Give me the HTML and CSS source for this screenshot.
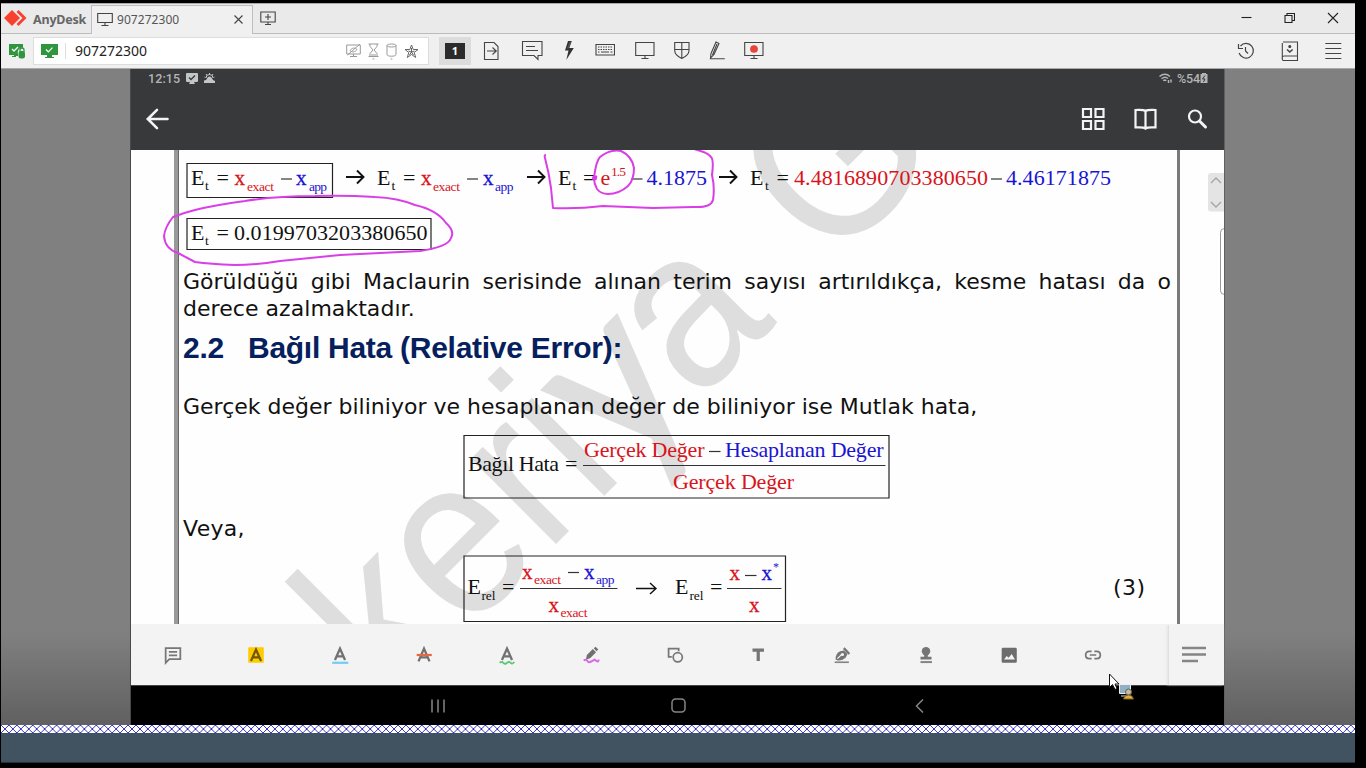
FILE: index.html
```html
<!DOCTYPE html>
<html lang="tr">
<head>
<meta charset="utf-8">
<title>AnyDesk</title>
<link rel="stylesheet" href="styles.css">
</head>
<body>
<div class="window">
  <header class="tabs">
    <div class="brand">
      <svg width="24" height="18" viewBox="0 0 24 18"><path d="M8 1l8 8-8 8-8-8z" fill="#f8402f"/><path d="M12.500 3l2-2 8 8-8 8-2-2 6-6z" fill="#f8402f"/></svg>
      <span>AnyDesk</span>
    </div>
    <div class="tab">
      <svg width="16" height="15" viewBox="0 0 16 15" class="line"><path d="M.7 1.500h14.600v9H.7zM8 10.500v2.800M4.500 13.500h7"/></svg>
      <span class="tab-name">907272300</span>
      <svg width="9" height="9" viewBox="0 0 9 9" class="line"><path d="M.5.5l8 8M8.500.5l-8 8"/></svg>
    </div>
    <svg class="line new-tab" width="16" height="15" viewBox="0 0 16 15"><path d="M.8 1h14.400v10H.8zM8 3v6M5 6h6M8 11v2.500M5 13.500h6"/></svg>
    <div class="win-buttons">
      <svg width="11" height="11" viewBox="0 0 11 11" class="line dark"><path d="M.5 5.500h10"/></svg>
      <svg width="11" height="11" viewBox="0 0 11 11" class="line dark"><path d="M1 3.500h7v7H1zM3 3.500v-2h7.500v7H8"/></svg>
      <svg width="12" height="12" viewBox="0 0 12 12" class="line dark"><path d="M1 1l10 10M11 1L1 11"/></svg>
    </div>
  </header>

  <div class="toolbar">
    <svg class="lock" width="17" height="15" viewBox="0 0 17 15"><path d="M0 0h14v4c-3-1-6 2-5 6v2H7v1H3v-1h2v-1H0z" fill="#2f963f"/><path d="M3 5l2 2 4-4" fill="none" stroke="#fff" stroke-width="1.300"/><rect x="9.500" y="7" width="6.500" height="7.500" rx="2.500" fill="#2f963f"/><path d="M11 8V6a2 2 0 014 0v2" fill="none" stroke="#2f963f" stroke-width="1.300"/></svg>
    <div class="address">
      <svg width="17" height="15" viewBox="0 0 17 15"><path d="M0 0h17v11h-6v2h2v1H4v-1h2v-2H0z" fill="#2f963f"/><path d="M5 5.500l2.300 2.300 4.200-4.200" fill="none" stroke="#fff" stroke-width="1.200"/></svg>
      <span class="address-text">907272300</span>
      <svg width="15" height="14" viewBox="0 0 15 14" class="line pale"><path d="M.7 1h13.600v9H.7zM7.500 10v2.500M4 12.500h7M1.500 11L14 0M4 6.500c2-3 5-3 7-1-2 3-5 3-7 1"/></svg>
      <svg width="11" height="17" viewBox="0 0 11 17" class="line pale"><path d="M.5 1h10M.5 13.500h10M2 1v2.500L5 7 2 10.500v3M9 1v2.500L6 7l3 3.500v3M3 12h5"/><circle cx="5.500" cy="16" r=".7" stroke="#b8c0e8"/></svg>
      <svg width="11" height="17" viewBox="0 0 11 17" class="line pale"><path d="M1 2.500c0-2 9-2 9 0v9c0 2.300-9 2.300-9 0zM1 2.500c0 2 9 2 9 0"/><circle cx="5.500" cy="16" r=".7" stroke="#b8c0e8"/></svg>
      <svg width="15" height="15" viewBox="0 0 15 15" class="line star"><path d="M7.500 1l1.700 4.500H14l-3.800 3 1.500 5-4.200-3-4.200 3 1.500-5-3.800-3h4.800zM7.500 4v4M4.500 7l3 1 3-1M7.500 8l-2 3M7.500 8l2 3"/></svg>
    </div>
    <div class="monitor-slot"><span>1</span></div>
    <div class="tools">
      <svg width="22" height="22" viewBox="481 40 22 22" class="line"><path d="M485.500 42.500h9.500l4 4v13h-13.500zM488 51h9M493.500 47.500l3.800 3.500-3.800 3.500"/></svg>
      <svg width="22" height="22" viewBox="522 40 22 22" class="line"><path d="M523.500 41.500h19.500v14h-4v4l-4-4h-11.500zM527 46.500h9M527 50.500h12"/></svg>
      <svg width="14" height="22" viewBox="563 40 14 22"><path d="M569 41h3.800l-2.500 7h4.500l-7.500 12 2.200-9.500H566z" fill="#333"/><path d="M570.500 42l-2.500 6.500h1.500l2.500-6.500z" fill="#555"/></svg>
      <svg width="20" height="22" viewBox="596 40 20 22" class="line"><path d="M597 44.500h18.500v10.500H597z"/><path d="M599 47h15M599 49.500h15" stroke-dasharray="1.500 1"/><path d="M599 52h1.500M602 52h8M611.500 52h2"/></svg>
      <svg width="20" height="22" viewBox="633 40 20 22" class="line"><path d="M633.700 42.500h18.300v13h-18.300zM643 55.500v3M639.500 58.500h7"/></svg>
      <svg width="16" height="22" viewBox="671.500 40 16 22" class="line"><path d="M672.200 42.500h14.300v8c0 4-4 6.500-7.200 8-3.200-1.500-7.100-4-7.100-8zM679.300 42.500v16M672.200 49.500h14.300"/></svg>
      <svg width="16" height="22" viewBox="709 40 16 22" class="line"><path d="M711 53.500l5-11.500 3 1.500-5 11-3.500 3.500zM717 44l-4.500 11M710 58.800h14.800"/></svg>
      <svg width="20" height="22" viewBox="743 40 20 22" class="line"><path d="M743.700 42.500H762v13h-18.300zM753 55.500v3M749.500 58.500h7"/><circle cx="753" cy="49" r="3.300" fill="#e6453c" stroke="#e6453c"/></svg>
    </div>
    <div class="right-tools">
      <svg width="18" height="18" viewBox="1237 42 18 18" class="line"><path d="M1240.500 46a7.300 7.300 0 11-1.400 7M1238.500 44v4.500h4.500M1245.500 47v4l2.500 2.500" stroke-width="1.200"/></svg>
      <svg width="18" height="20" viewBox="1281 41 18 20" class="line"><path d="M1283 42h14.500v18.500H1283c-1.500-2-1-4.500 1-4.500h13.500M1282.300 59V43"/><path d="M1287 49.500l2.800 2.500 2.800-2.500" stroke-width="1.600"/><circle cx="1289.800" cy="46.500" r="1" fill="#333"/></svg>
      <svg width="17" height="18" viewBox="1325 42 17 18" class="line"><path d="M1325.300 43.500h16M1325.300 48.500h16M1325.300 53.500h16M1325.300 58.500h16"/></svg>
    </div>
  </div>

  <main class="remote">
    <div class="tablet">
      <div class="status">
        <span>12:15</span>
        <svg width="12" height="12" viewBox="0 0 12 12"><path d="M1 0h10q1 0 1 1v7q0 1-1 1H8l1 2H3l1-2H1Q0 9 0 8V1q0-1 1-1z" fill="#c4c5c6"/><path d="M3 4.500l2 2 4-4" fill="none" stroke="#38393b" stroke-width="1.300"/></svg>
        <svg width="11" height="11" viewBox="0 0 11 11"><path d="M0 10V7.500l2-.5 2-3q2-1 3.500.5L9 7l2 1v2z" fill="#c4c5c6"/><path d="M2 5a3.500 3.500 0 017 0M5.500 0v2M2 1l1 1.500M9 1L8 2.500M.5 4l1 .5M10.500 4l-1 .5" fill="none" stroke="#c4c5c6"/></svg>
        <div class="status-right">
          <svg width="13" height="11" viewBox="0 0 13 11" fill="none" stroke="#b4b5b6" stroke-width="1.500"><path d="M.5 3.500q5.500-4.500 10.500 0M2.500 5.800q3.500-3 6.500-.3M4.300 7.800q1.500-1.300 3 0M9.500 7v3M12 6.500v3"/></svg>
          <span>%54</span>
          <svg width="8" height="11" viewBox="0 0 8 11"><path d="M2 0h4v1h1.500v9h-7V1H2z" fill="#b4b5b6"/><path d="M5 2.500L2.500 6H5L3.500 9" fill="none" stroke="#38393b"/></svg>
        </div>
      </div>

      <div class="app-bar">
        <svg width="24" height="24" viewBox="145 107 24 24" class="white"><path d="M167.500 119H149M157 109.800l-9.200 9.200 9.200 9.200"/></svg>
        <div class="app-actions">
          <svg width="24" height="24" viewBox="1081 107 24 24" class="white thin"><path d="M1083 109h8v8h-8zM1095.500 109h8v8h-8zM1083 121h8v8h-8zM1095.500 121h8v8h-8z"/></svg>
          <svg width="24" height="24" viewBox="1133 107 24 24" class="white thin"><path d="M1145.500 111c-2-1.500-6-1-10-1v17.500c4 0 8-.5 10 1 2-1.500 6-1 10-1V110c-4 0-8-.5-10 1zv17.500"/></svg>
          <svg width="24" height="24" viewBox="1185 107 24 24" class="white thin"><circle cx="1195" cy="116.500" r="6"/><path d="M1199.500 121l6 6" stroke-width="3"/></svg>
        </div>
      </div>

      <section class="document">
        <svg class="watermark" width="1093" height="474" viewBox="131 150 1093 474">
          <g transform="translate(391.800 708.200) rotate(-45)"><g transform="scale(.905 1)">
            <text class="wm" x="0" y="0">keri<tspan class="wm-y" x="364">y</tspan><tspan x="476">a</tspan><tspan x="686">G</tspan></text>
          </g></g>
        </svg>
        <article class="sheet">
          <svg class="math row-one" width="996" height="58" viewBox="183 150 996 58">
            <path class="frame" d="M187 163.500h145.500v34H187z"/>
            <text x="191" y="185">E</text><text class="sub" x="205" y="190">t</text><text x="216.500" y="185">=</text><text class="red var" x="234.500" y="185">x</text><text class="sub red" x="247" y="190.500" textLength="27">exact</text><path class="bar" d="M281 179h11"/><text class="blue var" x="296" y="185">x</text><text class="sub blue" x="309" y="190.500" textLength="18">app</text>
            <path class="arrow" d="M346 177h17M357 170.500l6.500 6.500-6.500 6.500"/>
            <text x="377" y="185">E</text><text class="sub" x="391.500" y="190">t</text><text x="403" y="185">=</text><text class="red var" x="421" y="185">x</text><text class="sub red" x="433" y="190.500" textLength="27">exact</text><path class="bar" d="M467 179h11"/><text class="blue var" x="483" y="185">x</text><text class="sub blue" x="495" y="190.500" textLength="18.500">app</text>
            <path class="arrow" d="M527 177h17M538 170.500l6.500 6.500-6.500 6.500"/>
            <text x="558" y="185">E</text><text class="sub" x="572.500" y="190">t</text><text x="583" y="185">=</text><text class="red" x="600.500" y="185">e</text><text class="sub red" x="611" y="176" textLength="15">1.5</text><path class="bar" d="M631 179h11.500"/><text class="blue" x="646.500" y="185" textLength="60.500">4.1875</text>
            <path class="arrow" d="M719 177h17M730 170.500l6.500 6.500-6.500 6.500"/>
            <text x="750" y="185">E</text><text class="sub" x="765" y="190">t</text><text x="776.500" y="185">=</text><text class="red" x="794" y="185" textLength="194">4.4816890703380650</text><path class="bar" d="M991 179h11"/><text class="blue" x="1006" y="185" textLength="105">4.46171875</text>
          </svg>
          <svg class="math" width="996" height="60" viewBox="183 208 996 60">
            <path class="frame" d="M187 218.500h244v31H187z"/>
            <text x="191" y="240">E</text><text class="sub" x="205" y="245">t</text><text x="216.500" y="240">=</text><text x="234" y="240" textLength="193.500">0.0199703203380650</text>
          </svg>
          <p class="para"><span class="justified">Görüldüğü gibi Maclaurin serisinde alınan terim sayısı artırıldıkça, kesme hatası da o</span><span class="last">derece azalmaktadır.</span></p>
          <h2><span class="num">2.2</span><span>Bağıl Hata (Relative Error):</span></h2>
          <p class="line-one">Gerçek değer biliniyor ve hesaplanan değer de biliniyor ise Mutlak hata,</p>
          <svg class="math centered" width="428" height="66" viewBox="463 434 428 66">
            <path class="frame" d="M464 435.500h425v62.500H464z"/>
            <text x="468" y="471" textLength="91">Bağıl Hata</text><text x="565" y="471">=</text>
            <path class="rule" d="M583 465.500h302.500"/>
            <text class="red" x="584" y="457" textLength="120.500">Gerçek Değer</text><path class="bar" d="M709 451.500h11.500"/><text class="blue" x="725" y="457" textLength="158.500">Hesaplanan Değer</text>
            <text class="red" x="673" y="489" textLength="121">Gerçek Değer</text>
          </svg>
          <p class="veya">Veya,</p>
          <div class="numbered">
            <svg class="math centered" width="324" height="68" viewBox="463 555 324 68">
              <path class="frame" d="M464 556h321.500v65.500H464z"/>
              <text x="467.500" y="594">E</text><text class="sub" x="481.500" y="599.500" textLength="14">rel</text><text x="502" y="594">=</text>
              <path class="rule" d="M520 588.500h97.500M727 588.500h54.500"/>
              <text class="red var" x="522" y="579">x</text><text class="sub red" x="534" y="583.500" textLength="27">exact</text><path class="bar" d="M568 572.500h11"/><text class="blue var" x="584" y="579">x</text><text class="sub blue" x="596" y="583.500" textLength="18.500">app</text>
              <text class="red var" x="548.500" y="611.500">x</text><text class="sub red" x="560.500" y="617" textLength="27">exact</text>
              <path class="arrow fine" d="M636 588.500h20M650 583l6 5.500-6 5.500"/>
              <text x="675" y="594">E</text><text class="sub" x="689.500" y="599.500" textLength="14">rel</text><text x="710" y="594">=</text>
              <text class="red var" x="729.500" y="580">x</text><path class="bar" d="M745 575.500h11.500"/><text class="blue var" x="761.500" y="580">x</text><text class="sub star-sup blue" x="773" y="571">*</text>
              <text class="red var" x="749" y="611.500">x</text>
            </svg>
            <span class="eq-number">(3)</span>
          </div>
        </article>
        <svg class="ink" width="1093" height="474" viewBox="131 150 1093 474">
          <path d="M173 217q-8 10-9 19 1 13 14 17l17 9q15 2 40 3 20 0 45-4l60-6 80-4q28-4 31-13 4-7-5-15-9-13-31-18-17-7-40-8-30-2-60-1-40 0-70 5-30 4-50 9-12 3-22 7z"/>
          <path d="M546 155q-2 0-1 3 4 15 6 30l2 20q25 1 50-2l50 2 40-1q18 1 20-7 2-12-1-25 2-15-1-18-2-4-17-8M594 178q2-17 6-21 10-8 21-6 11 5 13 17 0 12-6 18-9 8-20 8-7 0-11-5-3-5-3-11l3-2"/>
          <circle cx="594.500" cy="178" r="2.500" fill="#d93fe6" stroke="none"/>
        </svg>
        <svg class="scroll" width="17" height="126" viewBox="1207 171 17 126"><rect x="1208" y="173" width="19" height="38.500" rx="3" fill="#e4e4e4"/><path d="M1211 183l5-5 5 5M1211 202l5 5 5-5" fill="none" stroke="#a5a5a5" stroke-width="1.400"/><rect x="1220.500" y="228.500" width="14" height="66" rx="4" fill="#fff" stroke="#999"/></svg>
      </section>

      <footer class="edit-bar">
        <div class="edit-tools">
          <svg viewBox="0 0 24 24"><path d="M4 4.500h16v12H8l-4 4zM7.500 8.500h9M7.500 12.500h9" class="g"/></svg>
          <svg viewBox="0 0 24 24"><rect x="3.500" y="3.500" width="17" height="17" rx="1" fill="#fc0"/><path d="M6.500 18.500L12 6l5.500 12.500M8.500 14.500h7" class="g brown"/></svg>
          <svg viewBox="0 0 24 24"><path d="M6.500 17.500L12 5l5.500 12.500M8.500 13.500h7" class="g bold"/><path d="M3.500 20.500h17.500" stroke="#70cef0" stroke-width="2.400"/></svg>
          <svg viewBox="0 0 24 24"><path d="M6 19L12 5l6 14M8.500 14.500h7" class="g bold"/><path d="M4 12h16.500" stroke="#e76942" stroke-width="2.400"/></svg>
          <svg viewBox="0 0 24 24"><path d="M6.500 17.500L12 5l5.500 12.500M8.500 13.500h7" class="g bold"/><path d="M4 20.500q2-2 4 0t4 0 4 0 4-1" fill="none" stroke="#55c870" stroke-width="1.900"/></svg>
          <svg viewBox="0 0 24 24"><path d="M7.500 12l6.500-6.500 3.500 3.500-6.500 6.500-4.500 1.500zM15 4.500l2-1.500 3 3L18 8z" fill="#707070"/><path d="M4 18q3-2 4 .5t4.500.5 3.500-2 2 1.500 2.500-1.500" fill="none" stroke="#dc65e8" stroke-width="2.100"/></svg>
          <svg viewBox="0 0 24 24"><path d="M8.500 14H5V5h11v3" class="g"/><circle cx="15" cy="14.500" r="5" class="g"/></svg>
          <svg viewBox="0 0 24 24"><path d="M6 5h12.500v3.500h-4.500V18.500h-3.500V8.500H6z" fill="#757575"/></svg>
          <svg viewBox="0 0 24 24"><path d="M5 17q0-7 5-9l4-1 4 4-2 4q-3 3-8 3z" fill="#757575"/><path d="M14 4.500l6 6.500M6.500 17l5-5" stroke="#757575" stroke-width="2.500"/><path d="M7 16l5-5" stroke="#f3f3f3" stroke-width="1.400"/><circle cx="12.500" cy="11.500" r="1.700" fill="#f3f3f3"/><path d="M4 19.900h15.500" stroke="#858585" stroke-width="1.800"/></svg>
          <svg viewBox="0 0 24 24"><circle cx="12" cy="8" r="4.600" fill="#757575"/><path d="M10 10h4v4h4v3H6v-3h4z" fill="#757575"/><path d="M6 19.700h12.500" stroke="#858585" stroke-width="2.200"/></svg>
          <svg viewBox="0 0 24 24"><rect x="4" y="4" width="16.500" height="16.500" rx="1.500" fill="#6d6d6d"/><path d="M6.500 17l3-4 2 2 3.500-4 3.500 6z" fill="#f3f3f3"/></svg>
          <svg viewBox="0 0 24 24"><path d="M10.500 8H8q-4 0-4 4t4 4h2.500M13.500 8H16q4 0 4 4t-4 4h-2.500M8.500 12h7" class="g"/></svg>
        </div>
        <div class="menu"><svg width="24" height="18" viewBox="0 0 24 18"><path d="M0 2h24M0 8.500h24M0 15h16" stroke="#858585" stroke-width="2.500"/></svg></div>
      </footer>

      <nav class="nav-bar">
        <svg width="14" height="14" viewBox="0 0 14 14"><path d="M1 .5v13M7 .5v13M13 .5v13"/></svg>
        <svg class="home" width="15" height="15" viewBox="0 0 15 15"><rect x="1" y="1" width="13" height="13" rx="3.500"/></svg>
        <svg width="9" height="14" viewBox="0 0 9 14"><path d="M8 .5L1.500 7 8 13.500"/></svg>
      </nav>
    </div>
  </main>

  <svg class="hatch" width="1354" height="8"><defs><pattern id="weave" x="0" y="0" width="7.940" height="8" patternUnits="userSpaceOnUse"><path d="M0 0l7.940 8M7.940 0L0 8" stroke="#2020b8" stroke-width=".9"/></pattern></defs><rect width="1354" height="8" fill="#fff"/><rect width="1354" height="8" fill="url(#weave)"/></svg>
  <div class="slate"></div>
</div>
<svg class="cursor" width="28" height="28" viewBox="1108 672 28 28">
  <path d="M1109.500 674v13.500l3-3 2.500 5 2-1-2-4.500h4z" fill="#fff" stroke="#111"/>
  <path d="M1119.500 684.500h11v9h-11z" fill="#8fb0c5" stroke="#eee"/><path d="M1121 696h5" stroke="#ddd"/>
  <circle cx="1128.500" cy="692" r="3" fill="#c5bca6" stroke="#665"/><path d="M1123.500 699q1-4 5-4t5 4z" fill="#dfb13c" stroke="#80601c"/>
</svg>
</body>
</html>
```
FILE: styles.css
```css
* { box-sizing: border-box; }
html, body { margin: 0; background: #000; }
body { width: 1366px; height: 768px; overflow: hidden; padding: 3px 0 0 1px; position: relative; }
svg { display: block; flex: none; }
.window { width: 1354px; display: flex; flex-direction: column; font-family: "Noto Sans", sans-serif; }

.line { fill: none; stroke: #444; stroke-width: 1.1; }
.line.dark { stroke: #222; }
.line.pale { stroke: #999; stroke-width: 1; }
.line.star { stroke: #666; stroke-width: 1; }

.tabs { height: 31px; background: #eaeaea; border-top: 1px solid #aaa; border-bottom: 1px solid #bdbcbd; display: flex; }
.brand { width: 90px; display: flex; align-items: center; gap: 5px; padding-left: 3px; font-size: 12.5px; font-weight: 700; color: #666; }
.brand svg { margin-top: -2px; }
.brand span { letter-spacing: -.2px; padding-top: 1px; }
.tab { width: 162px; height: 30px; margin-top: 1px; border: 1px solid #c0bdc0; border-bottom: 0; background: #f0f0f0; display: flex; align-items: center; padding: 0 9px 3px 5px; font-size: 12px; color: #555; }
.tab-name { flex: 1; padding-left: 4px; letter-spacing: .05px; }
.new-tab { margin: 7px 0 0 7px; }
.win-buttons { margin-left: auto; display: flex; align-items: center; gap: 32px; padding: 0 16px 2px 0; }

.toolbar { height: 35px; background: #f0f0f0; border-bottom: 1px solid #aaa; display: flex; align-items: center; }
.lock { margin-left: 8px; }
.address { width: 396px; height: 28px; margin-left: 7px; background: #fff; border: 1px solid #ddd; display: flex; align-items: center; gap: 8px; padding: 0 10px 0 7px; color: #222; }
.address-text { flex: 1; border-left: 1px solid #ddd; padding-left: 9px; line-height: 16px; font-size: 14px; }
.address svg { margin-right: -1px; }
.monitor-slot { width: 32px; height: 28px; margin-left: 10px; background: #dcdcdc; display: flex; align-items: center; justify-content: center; }
.monitor-slot span { width: 20px; height: 16px; background: #2b2b2b; color: #fff; font-size: 11px; font-weight: 700; line-height: 16px; text-align: center; }
.tools { display: flex; margin-left: 9px; width: 284px; justify-content: space-between; padding-bottom: 1px; }
.right-tools { margin-left: auto; display: flex; align-items: center; gap: 26px; padding: 0 13px 1px 0; }

.remote { height: 656px; padding-left: 129px; background: linear-gradient(#808080 75%, #808080 86%, #606060); }
.tablet { width: 1095px; height: 656px; border-left: 1px solid #48494a; border-right: 1px solid #606060; background: #38393b; }
.status { height: 20px; display: flex; align-items: center; gap: 6px; padding: 0 16px 1px 17px; font: 500 12.5px Roboto, sans-serif; letter-spacing: .1px; color: #b4b5b6; }
.status-right { margin-left: auto; display: flex; align-items: center; gap: 5px; }
.status-right span { margin-right: -5px; letter-spacing: -.1px; }
.app-bar { height: 61px; display: flex; align-items: center; justify-content: space-between; padding: 0 15px 2px 14px; }
.app-actions { display: flex; gap: 28px; }
.white { fill: none; stroke: #f4f4f4; stroke-width: 2.6; stroke-linecap: round; }
.thin { stroke-width: 2.2; }

.document { height: 475px; position: relative; overflow: hidden; background: #fefefe; border-bottom: 1px solid #f3f3f3; color: #111; }
.watermark, .ink { position: absolute; inset: 0; }
.wm { font: 228px "Liberation Sans", Arial, sans-serif; fill: #dedede; }
.wm-y { font-family: Lato, sans-serif; font-size: 234px; stroke: #dedede; stroke-width: 3; }
.ink { fill: none; stroke: #d93fe6; stroke-width: 2; stroke-linejoin: round; }
.scroll { position: absolute; right: 0; top: 21px; }
.sheet { position: relative; height: 474px; margin: 0 44px 0 43px; padding-left: 5px; border-left: 4px solid #999; border-right: 3px solid #7a7a7a; box-shadow: inset 1px 0 0 #666; display: flex; flex-direction: column; overflow: hidden; }
.math { font: 22px "Liberation Serif", "Times New Roman", serif; fill: #111; }
.math .sub { font-size: 13.5px; }
.math .star-sup { font-size: 12px; }
.math .red { fill: #d8141c; }
.math .blue { fill: #1a14d2; }
.math .var { font-size: 21px; stroke-width: .3; }
.math .red.var { stroke: #d8141c; }
.math .blue.var { stroke: #1a14d2; }
.frame { fill: none; stroke: #222; stroke-width: 1.2; }
.rule, .bar { fill: none; stroke: #333; stroke-width: 1.2; }
.arrow { fill: none; stroke: #111; stroke-width: 1.9; }
.arrow.fine { stroke-width: 1.4; }

.sheet p { margin: 0; font: 22px/26px "DejaVu Sans", Verdana, sans-serif; white-space: nowrap; }
.sheet .para { width: 988px; height: 66px; line-height: 27px; }
.para span { display: block; }
.justified { text-align: justify; text-align-last: justify; }
.last { letter-spacing: .05px; }
.sheet h2 { margin: 0; height: 60px; font: bold 30px/28px "Liberation Sans", Arial, sans-serif; letter-spacing: -.27px; color: #06205e; display: flex; white-space: nowrap; }
.num { width: 65px; }
.sheet .line-one { height: 40px; }
.centered { margin-left: 280px; }
.sheet .veya { height: 55px; padding-top: 16px; letter-spacing: .3px; }
.numbered { display: flex; align-items: center; }
.eq-number { margin: -4px 0 0 326px; font: 22px "DejaVu Sans", Verdana, sans-serif; letter-spacing: .4px; }

.edit-bar { height: 60px; background: #f3f3f3; display: flex; }
.edit-tools { width: 1004px; display: grid; grid-template-columns: repeat(12, 1fr); align-items: center; justify-items: center; }
.edit-tools svg { width: 22px; height: 22px; }
.g { fill: none; stroke: #777; stroke-width: 1.9; }
.g.bold { stroke-width: 2.5; stroke: #717171; }
.g.brown { stroke: #705700; stroke-width: 2.4; }
.menu { width: 56px; margin-left: 33px; border-left: 1px solid #e0e0e0; padding: 21px 0 0 13px; box-shadow: -1px 0 2px #e4e4e4; }
.nav-bar { height: 40px; background: #000; border-top: 1px solid #444; display: flex; align-items: center; justify-content: space-between; padding: 0 300px 0 300px; }
.nav-bar svg { fill: none; stroke: #858585; stroke-width: 1.5; }
.nav-bar .home { margin-right: 3px; }

.slate { height: 30px; background: #415360; border-bottom: 1px solid #26323a; }
.cursor { position: absolute; left: 1108px; top: 672px; }
```
